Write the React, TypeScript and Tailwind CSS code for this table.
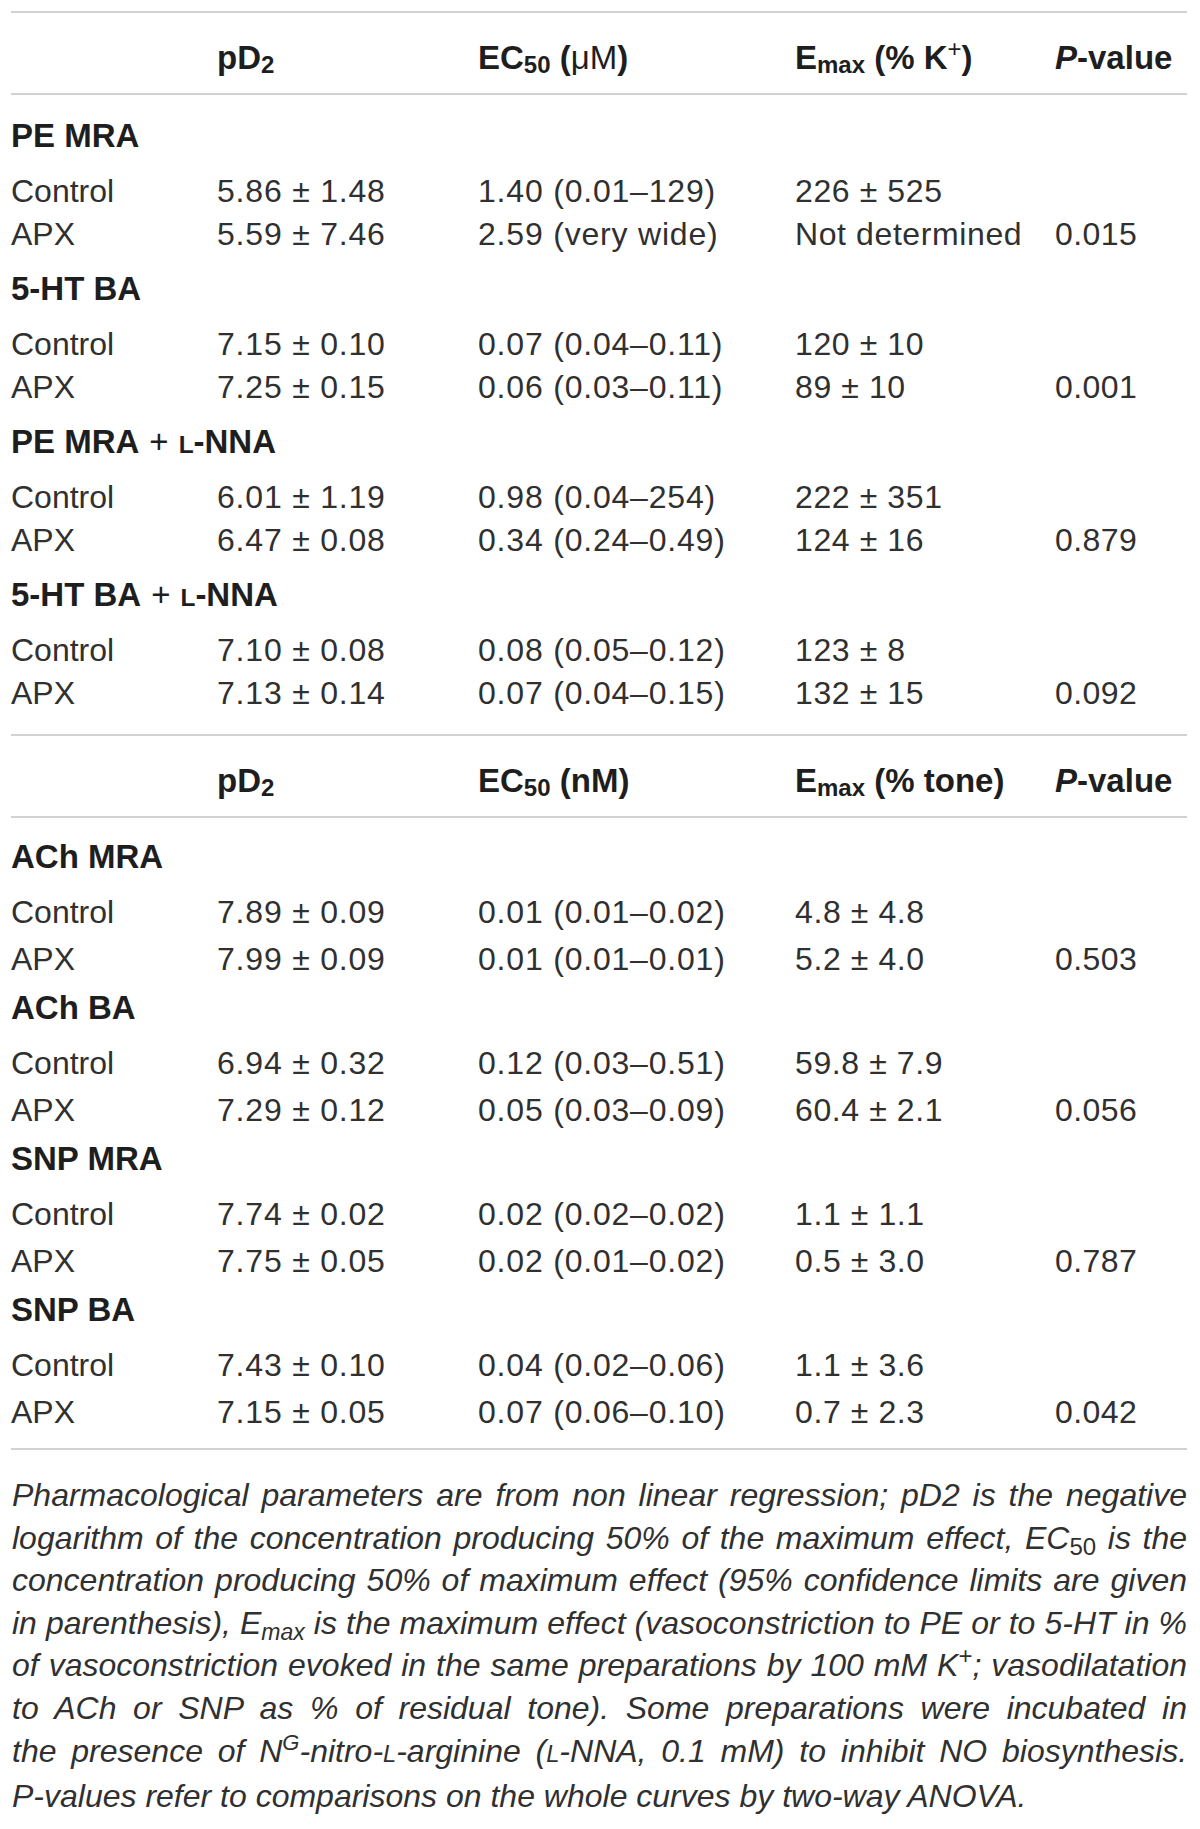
import React from "react";

type Row = [string, string, string, string, string];

type Group = {
  title: React.ReactNode;
  rows: Row[];
};

const SmallL = () => <span className="text-[0.74em]">L</span>;

const Plus = () => <span className="mx-[10px] font-normal">+</span>;

const groupsA: Group[] = [
  {
    title: <>PE MRA</>,
    rows: [
      ["Control", "5.86 ± 1.48", "1.40 (0.01–129)", "226 ± 525", ""],
      ["APX", "5.59 ± 7.46", "2.59 (very wide)", "Not determined", "0.015"],
    ],
  },
  {
    title: <>5-HT BA</>,
    rows: [
      ["Control", "7.15 ± 0.10", "0.07 (0.04–0.11)", "120 ± 10", ""],
      ["APX", "7.25 ± 0.15", "0.06 (0.03–0.11)", "89 ± 10", "0.001"],
    ],
  },
  {
    title: (
      <>
        PE MRA
        <Plus />
        <SmallL />
        -NNA
      </>
    ),
    rows: [
      ["Control", "6.01 ± 1.19", "0.98 (0.04–254)", "222 ± 351", ""],
      ["APX", "6.47 ± 0.08", "0.34 (0.24–0.49)", "124 ± 16", "0.879"],
    ],
  },
  {
    title: (
      <>
        5-HT BA
        <Plus />
        <SmallL />
        -NNA
      </>
    ),
    rows: [
      ["Control", "7.10 ± 0.08", "0.08 (0.05–0.12)", "123 ± 8", ""],
      ["APX", "7.13 ± 0.14", "0.07 (0.04–0.15)", "132 ± 15", "0.092"],
    ],
  },
];

const groupsB: Group[] = [
  {
    title: <>ACh MRA</>,
    rows: [
      ["Control", "7.89 ± 0.09", "0.01 (0.01–0.02)", "4.8 ± 4.8", ""],
      ["APX", "7.99 ± 0.09", "0.01 (0.01–0.01)", "5.2 ± 4.0", "0.503"],
    ],
  },
  {
    title: <>ACh BA</>,
    rows: [
      ["Control", "6.94 ± 0.32", "0.12 (0.03–0.51)", "59.8 ± 7.9", ""],
      ["APX", "7.29 ± 0.12", "0.05 (0.03–0.09)", "60.4 ± 2.1", "0.056"],
    ],
  },
  {
    title: <>SNP MRA</>,
    rows: [
      ["Control", "7.74 ± 0.02", "0.02 (0.02–0.02)", "1.1 ± 1.1", ""],
      ["APX", "7.75 ± 0.05", "0.02 (0.01–0.02)", "0.5 ± 3.0", "0.787"],
    ],
  },
  {
    title: <>SNP BA</>,
    rows: [
      ["Control", "7.43 ± 0.10", "0.04 (0.02–0.06)", "1.1 ± 3.6", ""],
      ["APX", "7.15 ± 0.05", "0.07 (0.06–0.10)", "0.7 ± 2.3", "0.042"],
    ],
  },
];

const cols = "grid grid-cols-[206px_261px_317px_260px_1fr]";

const Rule = () => <div className="h-[2px] bg-[#d2d2d2]" />;

const HeaderRow = ({
  unit,
  emax,
}: {
  unit: React.ReactNode;
  emax: React.ReactNode;
}) => (
  <div
    className={`${cols} h-[80px] pt-[8px] items-center text-[33px] font-bold text-[#1e1e1e] leading-none`}
  >
    <div />
    <div>
      pD<sub className="text-[24px] bottom-[-4px]">2</sub>
    </div>
    <div>
      EC<sub className="text-[24px] bottom-[-4px]">50</sub> ({unit})
    </div>
    <div>
      E<sub className="text-[24px] bottom-[-4px]">max</sub> {emax}
    </div>
    <div>
      <i>P</i>-value
    </div>
  </div>
);

const Body = ({
  groups,
  h,
}: {
  groups: Group[];
  h: [string, string, string];
}) => (
  <div>
    {groups.map((g, i) => (
      <div key={i}>
        <div
          className={`${h[0]} flex items-center text-[33px] font-bold text-[#1e1e1e]`}
        >
          <span>{g.title}</span>
        </div>
        {g.rows.map((r, j) => (
          <div
            key={j}
            className={`${cols} ${j === 0 ? h[1] : h[2]} items-center text-[32px] text-[#303030]`}
          >
            <div>{r[0]}</div>
            <div className="tracking-[0.8px]">{r[1]}</div>
            <div className="tracking-[0.8px]">{r[2]}</div>
            <div className="tracking-[0.6px]">{r[3]}</div>
            <div className="tracking-[0.4px]">{r[4]}</div>
          </div>
        ))}
      </div>
    ))}
  </div>
);

const Line = ({ children, last }: { children: React.ReactNode; last?: boolean }) => (
  <div
    className={`whitespace-nowrap ${last ? "text-left" : "text-justify [text-align-last:justify]"}`}
  >
    {children}
  </div>
);

export default function App() {
  return (
    <div className="min-h-screen bg-white font-['Liberation_Sans',Arial,sans-serif] pt-[11px]">
      <div className="ml-[11px] w-[1176px]">
        <Rule />
        <HeaderRow
          unit={<span className="font-normal">μM</span>}
          emax={
            <>
              (% K<sup className="text-[24px] top-[-12px] font-normal">+</sup>)
            </>
          }
        />
        <Rule />
        <div className="pt-[9px] pb-[18px]">
          <Body groups={groupsA} h={["h-[63px]", "h-[43px]", "h-[47px]"]} />
        </div>
        <Rule />
        <HeaderRow unit="nM" emax="(% tone)" />
        <Rule />
        <div className="pt-[8px] pb-[18px]">
          <Body groups={groupsB} h={["h-[62px]", "h-[47px]", "h-[42px]"]} />
        </div>
        <Rule />

        <div className="pt-[24px] pl-[1px] text-[32px] leading-[42.6px] italic text-[#303030]">
          <Line>
            Pharmacological parameters are from non linear regression; pD2 is the negative
          </Line>
          <Line>
            logarithm of the concentration producing 50% of the maximum effect, EC
            <sub className="not-italic text-[24px]">50</sub> is the
          </Line>
          <Line>
            concentration producing 50% of maximum effect (95% confidence limits are given
          </Line>
          <Line>
            in parenthesis), E<sub className="text-[23px]">max</sub> is the maximum effect
            (vasoconstriction to PE or to 5-HT in %
          </Line>
          <Line>
            of vasoconstriction evoked in the same preparations by 100 mM K
            <sup className="not-italic text-[24px] top-[-12px]">+</sup>; vasodilatation
          </Line>
          <Line>
            to ACh or SNP as % of residual tone). Some preparations were incubated in
          </Line>
          <Line>
            the presence of N<sup className="text-[22px] top-[-12px]">G</sup>-nitro-
            <span className="text-[0.74em]">L</span>-arginine (
            <span className="text-[0.74em]">L</span>-NNA, 0.1 mM) to inhibit NO biosynthesis.
          </Line>
          <Line last>
            P-values refer to comparisons on the whole curves by two-way ANOVA.
          </Line>
        </div>
      </div>
    </div>
  );
}
